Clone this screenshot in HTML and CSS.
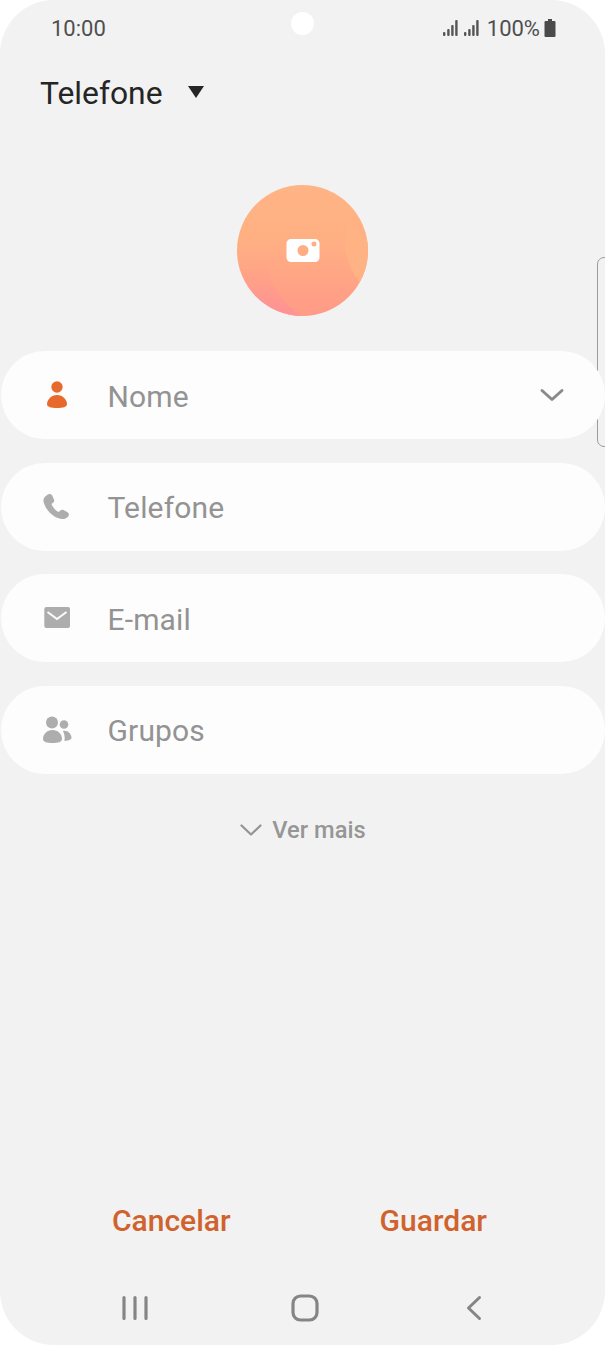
FILE: index.html
```html
<!DOCTYPE html>
<html lang="pt">
<head>
<meta charset="utf-8">
<title>Telefone</title>
<link rel="stylesheet" href="styles.css">
</head>
<body>
<div class="phone">
  <div class="camera-hole"></div>
  <div class="side-tab"></div>
  <header class="status">
    <span class="clock">10:00</span>
    <div class="status-right">
      <svg class="signal" width="36" height="16" viewBox="0 0 36 16"><g fill="#555"><rect x="0" y="12" width="2.400" height="4" rx="1"/><rect x="4.200" y="9" width="2.400" height="7" rx="1"/><rect x="8.200" y="5" width="2.400" height="11" rx="1"/><rect x="12.200" y="0" width="2.400" height="16" rx="1"/><rect x="21" y="12" width="2.400" height="4" rx="1"/><rect x="25.200" y="9" width="2.400" height="7" rx="1"/><rect x="29.200" y="5" width="2.400" height="11" rx="1"/><rect x="33.200" y="0" width="2.400" height="16" rx="1"/></g></svg>
      <span class="pct">100%</span>
      <svg width="12" height="18" viewBox="0 0 12 18"><path d="M4 0h4v2h2.500a1 1 0 0 1 1 1v14a1 1 0 0 1-1 1h-9a1 1 0 0 1-1-1V3a1 1 0 0 1 1-1H4z" fill="#4a4a4a"/></svg>
    </div>
  </header>
  <div class="account">
    <span class="account-name">Telefone</span>
    <span class="caret"></span>
  </div>
  <div class="avatar-wrap">
    <svg class="avatar" width="131" height="131" viewBox="0 0 131 131">
      <defs>
        <linearGradient id="peach" x1="0" y1="0" x2="0" y2="1"><stop offset="0" stop-color="#ffb485"/><stop offset=".4" stop-color="#ffb083"/><stop offset="1" stop-color="#ff9a87"/></linearGradient>
        <linearGradient id="pink" x1="0" y1="0" x2="0" y2="1"><stop offset="0" stop-color="#ff9296" stop-opacity="0"/><stop offset=".45" stop-color="#ff9296" stop-opacity=".2"/><stop offset="1" stop-color="#ff9296"/></linearGradient>
        <clipPath id="disc"><circle cx="65.500" cy="65.500" r="65.500"/></clipPath>
      </defs>
      <g clip-path="url(#disc)">
        <rect width="131" height="131" fill="url(#peach)"/>
        <path d="M111 36C107 50 107 62 110 72C113 82 118 92 125 102L135 60Z" fill="#ffb284"/>
        <path d="M0 70L29 70C30 95 44 118 65 132L0 132Z" fill="url(#pink)"/>
      </g>
      <g transform="translate(49 53.500)">
        <path fill-rule="evenodd" d="M5 .500h24a4.500 4.500 0 0 1 4.500 4.500v14a4.500 4.500 0 0 1-4.500 4.500H5A4.500 4.500 0 0 1 .500 19V5A4.500 4.500 0 0 1 5 .500zm12 6a5.500 5.500 0 1 0 0 11 5.500 5.500 0 0 0 0-11zM28 3a2.500 2.500 0 1 0 0 5 2.500 2.500 0 0 0 0-5z" fill="#fff"/>
      </g>
    </svg>
  </div>
  <main class="fields">
    <div class="field">
      <svg class="icon" width="30" height="32" viewBox="0 0 30 32"><circle cx="15" cy="8" r="5.700" fill="#e8692c"/><path d="M15 16c6 0 10 5 10 9 0 3-4 4-10 4s-10-1-10-4c0-4 4-9 10-9z" fill="#e8692c"/></svg>
      <span class="label">Nome</span>
      <svg class="chev" width="26" height="16" viewBox="0 0 26 16"><path d="M3 3.500l10 9 10-9" fill="none" stroke="#8a8a8a" stroke-width="3" stroke-linecap="round" stroke-linejoin="round"/></svg>
    </div>
    <div class="field">
      <svg class="icon" width="30" height="30" viewBox="0 0 30 30"><path d="M6 2.500c1.500-1 3.500-.5 4.200 1l1.800 4c.5 1.200.2 2.300-.7 3.100l-1.800 1.500c1 3 4 6.500 7 8l2-1.700c.9-.8 2-.9 3-.4l4 2.200c1.500.8 1.800 2.700.8 4-1.500 2-4 3.200-6.500 2.800C11 26 3 17 1.500 9.500 1 6.500 3 4 6 2.500z" fill="#adadad"/></svg>
      <span class="label">Telefone</span>
    </div>
    <div class="field">
      <svg class="icon" width="30" height="26" viewBox="0 0 30 26"><rect x="2.300" y="2" width="25.700" height="21" rx="2" fill="#adadad"/><path d="M5.500 7l9.500 7 9.500-7" fill="none" stroke="#fdfdfd" stroke-width="2"/></svg>
      <span class="label">E-mail</span>
    </div>
    <div class="field">
      <svg class="icon" width="30" height="28" viewBox="0 0 30 28"><g fill="#adadad"><circle cx="10" cy="6.500" r="6"/><circle cx="22" cy="8.500" r="4.300"/><path d="M1 23c0-5 4-9 9.500-9s9.500 4 9.500 9c0 3-4 4-9.500 4S1 26 1 23z"/><path d="M21 15c4-1 8 2 8.500 6.500.2 2-2.500 3-7 3.500.5-4 0-7-1.500-10z"/></g></svg>
      <span class="label">Grupos</span>
    </div>
  </main>
  <div class="more">
    <svg width="24" height="14" viewBox="0 0 24 14"><path d="M2.500 2.500l9.500 9 9.500-9" fill="none" stroke="#949494" stroke-width="2.200" stroke-linecap="round" stroke-linejoin="round"/></svg>
    <span>Ver mais</span>
  </div>
  <div class="spacer"></div>
  <div class="actions">
    <span class="action">Cancelar</span>
    <span class="action">Guardar</span>
  </div>
  <nav class="navbar">
    <svg width="28" height="28" viewBox="0 0 28 28"><g stroke="#858585" stroke-width="3.200" stroke-linecap="round"><path d="M3 3.500v21M14 3.500v21M25 3.500v21"/></g></svg>
    <svg width="28" height="28" viewBox="0 0 28 28"><rect x="2" y="2" width="24" height="24" rx="7.500" fill="none" stroke="#858585" stroke-width="3.200"/></svg>
    <svg width="28" height="28" viewBox="0 0 28 28"><path d="M19.500 3.500L8.500 14l11 10.500" fill="none" stroke="#858585" stroke-width="3" stroke-linecap="round" stroke-linejoin="round"/></svg>
  </nav>
</div>
</body>
</html>
```
FILE: styles.css
```css
* { box-sizing: border-box; }
html, body { margin: 0; padding: 0; background: #fff; }
body { width: 605px; height: 1346px; overflow: hidden; font-family: Roboto, "Liberation Sans", sans-serif; }
.phone { position: relative; width: 605px; height: 1345px; background: #f2f2f2; border-radius: 54px; display: flex; flex-direction: column; overflow: hidden; }
.camera-hole { position: absolute; left: 291px; top: 12px; width: 23px; height: 23px; border-radius: 50%; background: #fff; }
.side-tab { position: absolute; left: 597px; top: 257px; width: 20px; height: 190px; border: 1.5px solid #9c9c9c; border-radius: 7px; }
.status { height: 56px; display: flex; justify-content: space-between; align-items: center; padding: 0 49px 0 51px; color: #4f4f4f; font-size: 22px; }
.status-right { display: flex; align-items: center; gap: 4px; }
.signal { margin-right: 4px; }
.account { height: 74px; display: flex; align-items: center; padding-left: 40px; gap: 25px; }
.account-name { font-size: 31.8px; color: #252525; }
.caret { width: 0; height: 0; border-left: 8px solid transparent; border-right: 8px solid transparent; border-top: 12px solid #252525; margin-top: -2px; }
.avatar-wrap { display: flex; justify-content: center; padding-top: 55px; }
.avatar { display: block; }
.fields { position: relative; z-index: 1; display: flex; flex-direction: column; gap: 23.67px; margin-top: 35px; padding-left: 1px; }
.field { height: 88px; background: #fdfdfd; border-radius: 44px; display: flex; align-items: center; padding: 0 40px 0 41px; gap: 35.5px; }
.icon { width: 30px; flex: none; }
.label { font-size: 30px; color: #939393; flex: 1; letter-spacing: .15px; padding-top: 2px; }
.more { display: flex; justify-content: center; align-items: center; gap: 9px; margin-top: 42px; font-size: 23.7px; font-weight: 500; color: #969696; }
.spacer { flex: 1; }
.actions { display: flex; gap: 149px; padding-left: 112px; margin-bottom: 56px; }
.action { font-size: 30px; font-weight: 500; color: #d0622e; }
.navbar { display: flex; justify-content: space-between; padding: 0 117px 23px 121px; }
```
